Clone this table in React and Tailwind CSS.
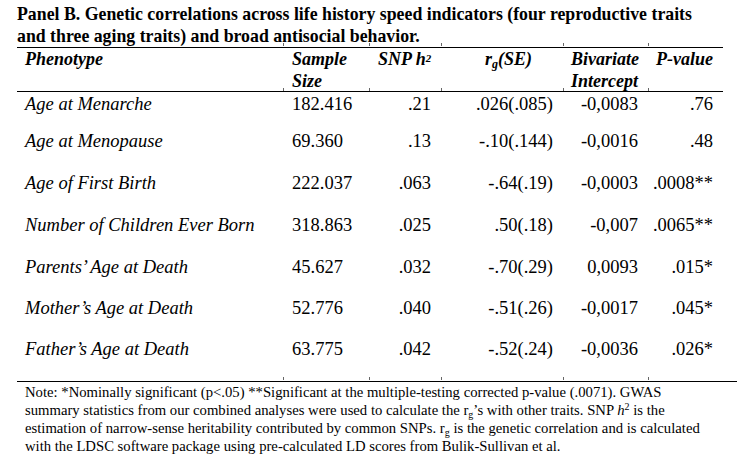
import React from "react";

const rows = [
  ["Age at Menarche", "182.416", ".21", ".026(.085)", "-0,0083", ".76", "h-[37px]"],
  ["Age at Menopause", "69.360", ".13", "-.10(.144)", "-0,0016", ".48", "h-[42px]"],
  ["Age of First Birth", "222.037", ".063", "-.64(.19)", "-0,0003", ".0008**", "h-[42px]"],
  ["Number of Children Ever Born", "318.863", ".025", ".50(.18)", "-0,007", ".0065**", "h-[42px]"],
  ["Parents\u2019 Age at Death", "45.627", ".032", "-.70(.29)", "0,0093", ".015*", "h-[41px]"],
  ["Mother\u2019s Age at Death", "52.776", ".040", "-.51(.26)", "-0,0017", ".045*", "h-[41px]"],
  ["Father\u2019s Age at Death", "63.775", ".042", "-.52(.24)", "-0,0036", ".026*", "h-[44px]"],
];

const cols = "grid grid-cols-[266px_86px_72px_122px_85px_75px]";

function Ticks() {
  return (
    <div className={`${cols} h-0`}>
      {[0, 1, 2, 3, 4, 5].map((i) => (
        <div key={i} className="relative">
          {i > 0 && <span className="absolute left-0 -top-[4px] w-px h-[3px] bg-black/60" />}
        </div>
      ))}
    </div>
  );
}

export default function App() {
  return (
    <div className="w-[753px] h-[470px] bg-white text-black overflow-hidden font-['Liberation_Serif','Times_New_Roman',serif]">
      <div className="pl-[17px]">
        <div className="pt-[3px] text-[17.8px] leading-[22px] font-bold w-[730px] whitespace-nowrap">
          Panel B. Genetic correlations across life history speed indicators (four reproductive traits
          <br />
          and three aging traits) and broad antisocial behavior.
        </div>
        <div className="w-[706px]">
          <Ticks />
          <div className={`${cols} border-t-[1.5px] border-b-[1.5px] border-black h-[45px] text-[18px] leading-[22px] font-bold italic whitespace-nowrap`}>
            <div className="pl-[8px]">Phenotype</div>
            <div className="pl-[9px]">Sample<br />Size</div>
            <div className="pl-[9px]">SNP h<sup className="text-[11px] relative -top-[3px]">2</sup></div>
            <div className="pl-[44px]">r<sub className="text-[12px]">g</sub>(SE)</div>
            <div className="pl-[8px]">Bivariate<br />Intercept</div>
            <div className="pl-[8px]">P-value</div>
          </div>
          <Ticks />
          {rows.map((r) => (
            <div key={r[0]} className={`${cols} ${r[6]} text-[18.5px] leading-[24px] whitespace-nowrap`}>
              <div className="pl-[8px] italic">{r[0]}</div>
              <div className="pl-[9px]">{r[1]}</div>
              <div className="text-right pr-[10px]">{r[2]}</div>
              <div className="text-right pr-[10px]">{r[3]}</div>
              <div className="text-right pr-[10px]">{r[4]}</div>
              <div className="text-right pr-[10px]">{r[5]}</div>
            </div>
          ))}
          <Ticks />
          <div className="border-t-[1.5px] border-black pt-[1px] pl-[8px] text-[14.7px] leading-[18px] w-[720px] whitespace-nowrap">
            Note: *Nominally significant (p&lt;.05) **Significant at the multiple-testing corrected p-value (.0071). GWAS
            <br />
            summary statistics from our combined analyses were used to calculate the r<sub className="text-[10px]">g</sub>&rsquo;s with other traits. SNP <i>h</i><sup className="text-[10px]">2</sup> is the
            <br />
            estimation of narrow-sense heritability contributed by common SNPs. r<sub className="text-[10px]">g</sub> is the genetic correlation and is calculated
            <br />
            with the LDSC software package using pre-calculated LD scores from Bulik-Sullivan et al.
          </div>
        </div>
      </div>
    </div>
  );
}
